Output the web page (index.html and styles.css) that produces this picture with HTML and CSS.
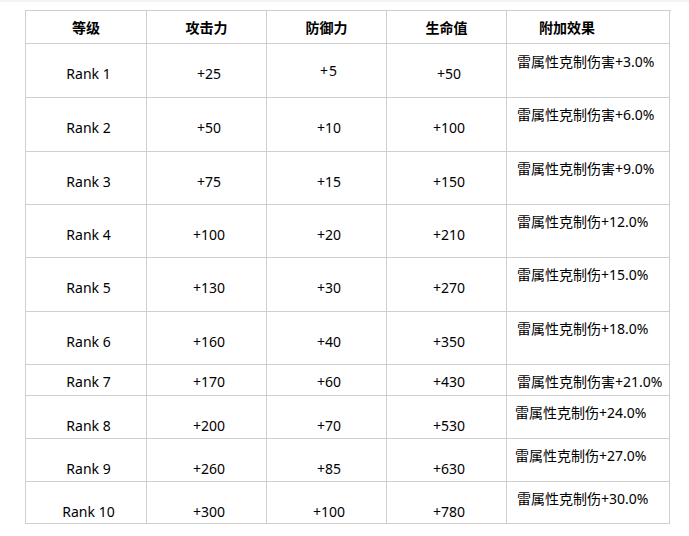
FILE: index.html
```html
<!DOCTYPE html>
<html lang="zh-CN">
<head>
<meta charset="utf-8">
<title>Rank</title>
<link rel="stylesheet" href="styles.css">
</head>
<body>
<div class="topbar"></div>
<div class="table">
  <div class="c head">等级</div>
  <div class="c head">攻击力</div>
  <div class="c head">防御力</div>
  <div class="c head">生命值</div>
  <div class="c head head-fx">附加效果</div>

  <div class="c v">Rank 1</div><div class="c v">+25</div><div class="c v up">+5</div><div class="c v">+50</div><div class="c fx fx1">雷属性克制伤害+3.0%</div>
  <div class="c v">Rank 2</div><div class="c v">+50</div><div class="c v">+10</div><div class="c v">+100</div><div class="c fx">雷属性克制伤害+6.0%</div>
  <div class="c v">Rank 3</div><div class="c v">+75</div><div class="c v">+15</div><div class="c v">+150</div><div class="c fx">雷属性克制伤害+9.0%</div>
  <div class="c v">Rank 4</div><div class="c v">+100</div><div class="c v">+20</div><div class="c v">+210</div><div class="c fx">雷属性克制伤+12.0%</div>
  <div class="c v">Rank 5</div><div class="c v">+130</div><div class="c v">+30</div><div class="c v">+270</div><div class="c fx">雷属性克制伤+15.0%</div>
  <div class="c v">Rank 6</div><div class="c v">+160</div><div class="c v">+40</div><div class="c v">+350</div><div class="c fx">雷属性克制伤+18.0%</div>
  <div class="c v s">Rank 7</div><div class="c v s">+170</div><div class="c v s">+60</div><div class="c v s">+430</div><div class="c fx">雷属性克制伤害+21.0%</div>
  <div class="c v">Rank 8</div><div class="c v">+200</div><div class="c v">+70</div><div class="c v">+530</div><div class="c fx fx-l">雷属性克制伤+24.0%</div>
  <div class="c v">Rank 9</div><div class="c v">+260</div><div class="c v">+85</div><div class="c v">+630</div><div class="c fx fx-l">雷属性克制伤+27.0%</div>
  <div class="c v">Rank 10</div><div class="c v">+300</div><div class="c v">+100</div><div class="c v">+780</div><div class="c fx">雷属性克制伤+30.0%</div>
</div>
</body>
</html>
```
FILE: styles.css
```css
html, body {
  margin: 0;
  padding: 0;
  background: #ffffff;
}
body {
  font-family: "Noto Sans", "Noto Sans CJK SC", sans-serif;
  font-size: 14px;
  line-height: 20px;
  color: #000000;
}
.topbar {
  height: 2px;
  background: #f3f3f3;
}
.table {
  display: grid;
  grid-template-columns: 121px 120px 120px 120px 163px;
  grid-template-rows: 33px 54px 54px 53px 53px 54px 53px 31px 43px 43px 42px;
  width: 645px;
  margin: 8px 0 0 25px;
  border-left: 1px solid #cfcfcf;
  border-top: 1px solid #cfcfcf;
}
.c {
  box-sizing: border-box;
  border-right: 1px solid #cfcfcf;
  border-bottom: 1px solid #cfcfcf;
  white-space: nowrap;
  overflow: hidden;
}
.head {
  font-weight: bold;
  text-align: center;
  padding-top: 7px;
}
.head-fx {
  text-align: left;
  padding-left: 32px;
}
.v {
  text-align: center;
  padding-top: 20px;
  padding-left: 5px;
}
.v.up {
  padding-top: 17px;
  letter-spacing: 1px;
}
.v.s {
  padding-top: 7px;
}
.fx {
  padding-top: 7px;
  padding-left: 10px;
}
.fx1 {
  padding-top: 8px;
}
.fx-l {
  padding-left: 8px;
}
```
